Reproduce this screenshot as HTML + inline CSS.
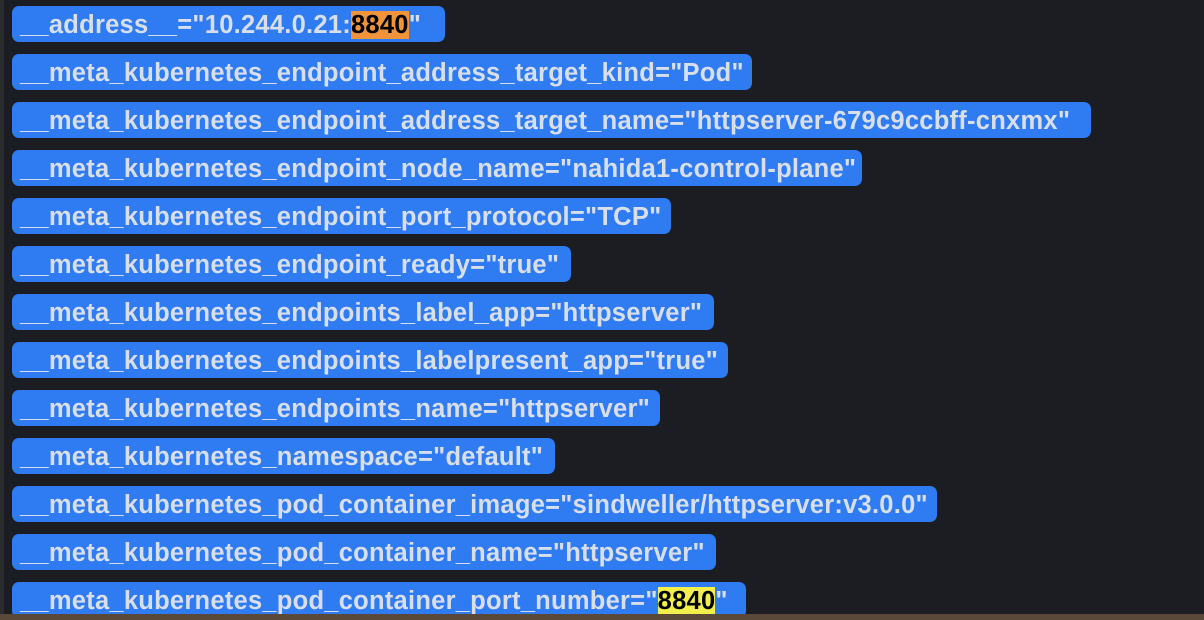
<!DOCTYPE html>
<html><head><style>
body{margin:0;width:1204px;height:620px;background:#1b1d22;overflow:hidden;position:relative;font-family:"Liberation Sans",sans-serif;}
.l{position:absolute;left:0;top:0;width:4px;height:620px;background:#2b2c30}
.b{position:absolute;left:0;top:614px;width:1204px;height:6px;background:#5a4838}
.p{position:absolute;left:12px;height:36px;background:#2f7bf2;border-radius:7px;color:#d8dfeb;font-weight:bold;font-size:25.5px;letter-spacing:0.25px;line-height:39px;padding-left:8px;box-sizing:border-box;white-space:nowrap;overflow:hidden}
.o{background:#f0943c;color:#000}
.y{background:#f2ee4a;color:#000}
</style></head><body>
<div class="l"></div>
<div class="p" style="top:6px;width:433px">__address__="10.244.0.21:<span class="o">8840</span>"</div>
<div class="p" style="top:54px;width:740px">__meta_kubernetes_endpoint_address_target_kind="Pod"</div>
<div class="p" style="top:102px;width:1079px">__meta_kubernetes_endpoint_address_target_name="httpserver-679c9ccbff-cnxmx"</div>
<div class="p" style="top:150px;width:850px">__meta_kubernetes_endpoint_node_name="nahida1-control-plane"</div>
<div class="p" style="top:198px;width:659px">__meta_kubernetes_endpoint_port_protocol="TCP"</div>
<div class="p" style="top:246px;width:559px">__meta_kubernetes_endpoint_ready="true"</div>
<div class="p" style="top:294px;width:702px">__meta_kubernetes_endpoints_label_app="httpserver"</div>
<div class="p" style="top:342px;width:716px">__meta_kubernetes_endpoints_labelpresent_app="true"</div>
<div class="p" style="top:390px;width:648px">__meta_kubernetes_endpoints_name="httpserver"</div>
<div class="p" style="top:438px;width:543px">__meta_kubernetes_namespace="default"</div>
<div class="p" style="top:486px;width:925px">__meta_kubernetes_pod_container_image="sindweller/httpserver:v3.0.0"</div>
<div class="p" style="top:534px;width:704px">__meta_kubernetes_pod_container_name="httpserver"</div>
<div class="p" style="top:582px;width:734px">__meta_kubernetes_pod_container_port_number="<span class="y">8840</span>"</div>
<div class="b"></div>
</body></html>
